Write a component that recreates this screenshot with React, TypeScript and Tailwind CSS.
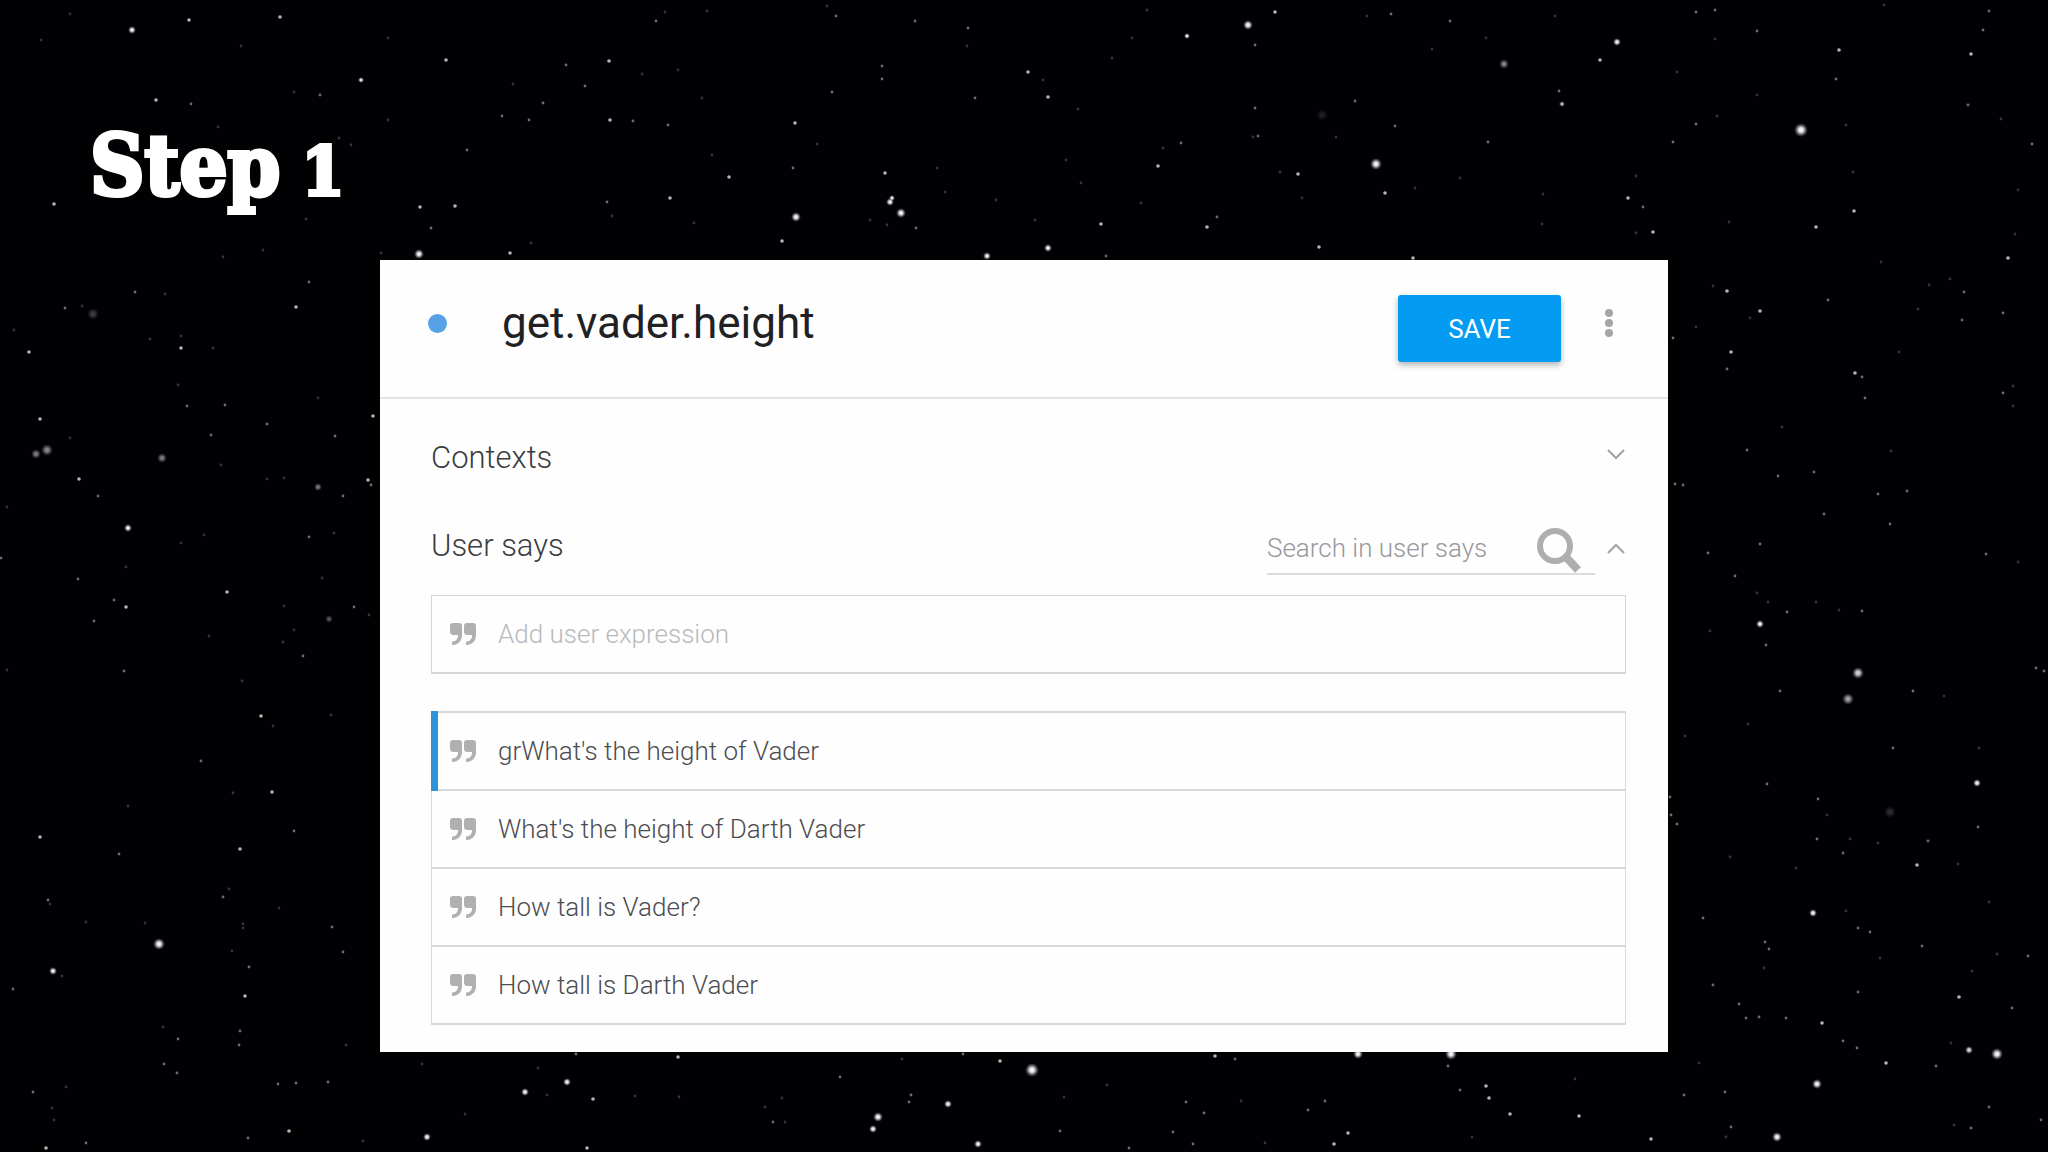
import React from "react";

type Point = [number, number];
type Glow = [number, number, number, number];

const FAINT: Point[] = [
  [70,14],[41,40],[241,46],[388,38],[642,74],[678,70],[665,12],[513,84],[294,92],[388,120],[218,127],[339,138],[351,145],
  [612,216],[306,219],[381,253],[531,243],[263,250],[223,257],[165,294],[82,306],[14,330],[150,339],[181,336],[213,348],[694,223],
  [707,11],[827,6],[967,46],[702,98],[817,144],[1043,80],[1078,109],[1066,160],[712,155],[887,225],[870,220],[937,168],[945,192],
  [996,200],[1035,220],[1081,183],[1141,203],[1163,148],[1112,58],[1253,137],[1280,172],[1302,198],[1336,137],[1367,16],[1147,10],[1132,38],
  [1432,49],[1486,38],[1555,16],[1415,188],[1460,178],[1543,194],[1542,224],[1636,176],[1636,233],[1717,116],[1677,72],[1715,39],
  [1884,5],[2001,119],[1846,125],[1757,95],[1853,172],[2018,190],[1729,222],[2015,234],[1881,262],[1713,286],[1950,279],[1929,285],
  [1750,318],[1918,309],[1696,327],[1899,352],[2013,386],[178,385],[318,398],[70,438],[221,465],[267,479],[284,478],[7,507],
  [204,535],[181,543],[334,533],[126,567],[322,578],[284,606],[369,615],[209,636],[294,630],[283,642],[7,670],[242,681],[273,726],
  [331,715],[233,793],[128,806],[50,904],[86,922],[145,923],[229,889],[279,908],[243,924],[243,928],[232,951],[62,976],[163,1027],
  [346,1045],[66,1087],[52,1108],[54,1120],[363,1141],[422,1064],[538,1068],[547,1095],[635,1096],[679,1097],[465,1114],[902,1059],
  [782,1098],[765,1107],[785,1122],[1064,1097],[1107,1085],[1241,1101],[1265,1143],[1472,1137],[1575,1079],[2013,406],[1782,427],
  [1891,451],[2018,562],[1757,593],[1768,602],[1816,602],[1839,610],[1710,631],[1944,696],[1748,724],[1685,736],[1979,748],
  [1827,815],[1850,839],[1878,843],[1730,857],[1796,868],[1958,864],[1846,911],[1989,902],[1880,958],[1997,954],[1972,971],
  [1764,968],[1951,1043],[1699,1063],[1954,1125],[1726,1137],
];

const MEDIUM: Point[] = [
  [566,65],[656,21],[585,86],[191,104],[320,95],[543,103],[502,116],[529,120],[633,121],[668,125],[467,150],[607,202],[431,228],
  [309,282],[135,292],[65,308],[836,16],[915,21],[968,28],[882,66],[882,79],[832,92],[975,98],[793,168],[916,228],[1106,256],
  [1181,143],[1255,45],[1255,108],[1258,136],[1355,101],[1217,217],[1391,14],[1450,21],[1559,91],[1395,126],[1488,142],[1643,207],
  [1673,142],[1696,124],[1696,12],[1715,10],[1757,31],[1836,79],[1989,11],[1983,30],[1968,105],[2032,144],[1964,292],[1828,300],
  [1962,320],[2003,313],[1673,338],[1727,369],[1862,377],[1865,398],[2003,393],[187,406],[225,405],[267,424],[211,435],[335,436],
  [98,496],[371,485],[343,496],[309,537],[1,558],[78,579],[114,600],[94,621],[354,607],[303,656],[124,671],[201,761],[119,854],
  [294,831],[48,900],[223,897],[332,927],[343,952],[13,989],[249,967],[178,1039],[240,1031],[239,1045],[164,1064],[177,1073],
  [278,1084],[296,1083],[328,1082],[33,1092],[248,1138],[86,1143],[576,1054],[963,1054],[840,1077],[773,1122],[911,1095],
  [909,1102],[1060,1131],[1235,1059],[1186,1102],[1204,1113],[1173,1132],[1193,1144],[1129,1148],[1308,1110],[1325,1101],
  [1448,1066],[1460,1090],[1747,450],[1778,476],[1814,472],[1675,484],[1683,485],[1878,494],[1907,491],[1824,514],[1890,524],
  [1760,544],[1708,553],[1986,554],[1735,576],[1787,612],[1862,611],[1766,645],[2036,668],[2044,671],[1780,691],[1913,691],
  [1893,748],[1767,784],[1670,797],[1671,815],[1677,824],[1818,799],[1978,827],[1928,841],[1817,839],[1843,853],[1703,918],
  [1858,928],[1870,932],[1922,946],[1765,942],[1769,949],[2028,956],[1713,985],[1858,992],[1739,1004],[1746,1018],[1759,1017],
  [1786,1018],[2012,1008],[1843,1041],[1857,1048],[1936,1066],[1684,1095],[1725,1092],[1989,1107],[2041,1120],[1971,1128],
  [1731,1127],
];

const BRIGHT: Point[] = [
  [189,20],[280,17],[446,60],[609,61],[156,100],[610,120],[54,204],[420,207],[455,206],[670,198],[510,253],[296,307],[181,348],
  [29,352],[795,123],[1028,72],[1048,97],[729,177],[885,173],[782,241],[1101,224],[1158,166],[1275,12],[1298,174],[1207,227],
  [1319,247],[1600,60],[1385,193],[1413,258],[1628,198],[1653,232],[1839,50],[1971,54],[1854,211],[1816,227],[2008,258],
  [1727,291],[1760,311],[1731,352],[1855,373],[373,416],[40,419],[79,479],[368,480],[126,607],[227,592],[261,716],[272,792],
  [40,837],[240,849],[245,996],[289,1131],[46,1148],[587,1148],[593,1099],[678,1057],[1000,1061],[1215,1056],[1348,1133],
  [1334,1144],[1486,1086],[1489,1098],[1510,1114],[1579,1116],[1651,1139],[1917,865],[1959,997],[1822,1023],[1886,1063],
];

/* x, y, radius, opacity */
const GLOWS: Glow[] = [
  [132,30,4,1],[361,80,3,1],[419,254,5,1],[93,314,6,0.25],[892,198,3,1],[890,202,4,1],[901,213,5,1],[796,217,5,1],[987,256,4,1],
  [1048,248,4,1],[1187,36,3,1],[1248,25,5,1],[1322,115,6,0.12],[1376,164,6,1],[1504,64,5,0.55],[1617,42,4,1],[1562,104,3,0.8],
  [1801,130,7,1],[47,450,6,0.55],[36,454,5,0.5],[162,458,5,0.5],[318,487,4,0.5],[128,528,4,1],[329,619,4,0.35],[159,944,6,1],
  [53,971,4,1],[427,1137,4,1],[567,1082,4,1],[525,1092,4,1],[1032,1070,7,1],[948,1104,4,1],[878,1117,5,1],[873,1129,4,1],
  [978,1144,4,1],[1358,1054,5,1],[1451,1054,6,1],[1760,624,4,1],[1858,673,6,0.85],[1848,699,6,0.65],[1977,783,4,1],
  [1890,812,6,0.18],[1813,913,4,1],[1969,1050,4,0.9],[1997,1054,6,1],[1817,1084,5,1],[1777,1137,5,1],
];

function StarField() {
  return (
    <svg
      className="absolute inset-0 h-full w-full"
      viewBox="0 0 2048 1152"
      preserveAspectRatio="xMidYMid slice"
      aria-hidden="true"
    >
      <defs>
        <radialGradient id="glow">
          <stop offset="0" stopColor="#fff" />
          <stop offset="0.35" stopColor="#f0f2f6" stopOpacity="0.9" />
          <stop offset="1" stopColor="#8890a0" stopOpacity="0" />
        </radialGradient>
      </defs>
      <g fill="#fff" opacity="0.2">
        {FAINT.map(([x, y], i) => <circle key={i} cx={x} cy={y} r="1.4" />)}
      </g>
      <g fill="#fff" opacity="0.42">
        {MEDIUM.map(([x, y], i) => <circle key={i} cx={x} cy={y} r="1.4" />)}
      </g>
      <g fill="#fff" opacity="0.7">
        {BRIGHT.map(([x, y], i) => <circle key={i} cx={x} cy={y} r="1.8" />)}
      </g>
      <g fill="url(#glow)">
        {GLOWS.map(([x, y, r, o], i) => <circle key={i} cx={x} cy={y} r={r} opacity={o} />)}
      </g>
    </svg>
  );
}

function QuoteIcon() {
  return (
    <svg className="h-[22px] w-[26px] shrink-0 fill-[#b0b0b2]" viewBox="0 0 26 22" aria-hidden="true">
      <path d="M3 0h6a3 3 0 0 1 3 3v9.500c0 5-4 9.500-9.300 9.500H2v-3.500h.7c3 0 5.300-2.500 5.300-5.700V12H3.500A3.500 3.500 0 0 1 0 8.500V3a3 3 0 0 1 3-3z" />
      <path d="M17 0h6a3 3 0 0 1 3 3v9.500c0 5-4 9.500-9.300 9.500H16v-3.500h.7c3 0 5.300-2.500 5.300-5.700V12h-4.500A3.500 3.500 0 0 1 14 8.500V3a3 3 0 0 1 3-3z" />
    </svg>
  );
}

function Chevron({ up = false }: { up?: boolean }) {
  return (
    <svg
      className="h-[12px] w-[20px] fill-none stroke-[#a3a3a5] stroke-2"
      viewBox="0 0 20 12"
      aria-hidden="true"
    >
      <path d={up ? "M2 10l8-8 8 8" : "M2 2l8 8 8-8"} />
    </svg>
  );
}

const EXPRESSIONS = [
  "grWhat's the height of Vader",
  "What's the height of Darth Vader",
  "How tall is Vader?",
  "How tall is Darth Vader",
];

export default function App() {
  return (
    <main className="relative min-h-screen overflow-hidden bg-[#010103] font-['Roboto',sans-serif]">
      <StarField />
      <div className="relative flex flex-col pb-[99px] pt-[116px]">
        <h1 className="h-[100px] pl-[90px] font-['DejaVu_Serif_Condensed','DejaVu_Serif',serif] text-[84px] font-bold leading-[100px] text-white [-webkit-text-stroke:4px_white]">
          Step<span className="text-[68px]"> 1</span>
        </h1>

        <section className="mx-auto mt-[44px] w-full max-w-[1288px] bg-[#fefefe] pb-[27px]">
          <header className="flex h-[139px] items-start border-b-2 border-[#e4e4e5] pl-[48px] pr-[55px] pt-[35px]">
            <span className="mt-[19px] size-[19px] rounded-full bg-[#57a2e6]" />
            <h2 className="ml-[55px] flex-1 text-[44px] leading-[56px] text-[#212124]">get.vader.height</h2>
            <button
              type="button"
              className="h-[67px] w-[163px] rounded-[3px] bg-[#039cf2] pt-[2px] text-[26px] text-white shadow-[0_3px_6px_rgba(0,0,0,0.3)]"
            >
              SAVE
            </button>
            <button type="button" aria-label="More options" className="ml-[44px] mt-[13px]">
              <svg className="h-[30px] w-[8px] fill-[#a5a5a7]" viewBox="0 0 8 30" aria-hidden="true">
                <circle cx="4" cy="5" r="4" />
                <circle cx="4" cy="15" r="4" />
                <circle cx="4" cy="25" r="4" />
              </svg>
            </button>
          </header>

          <div className="pl-[51px] pr-[42px]">
            <button type="button" className="mt-[39px] flex h-[40px] w-full items-center justify-between">
              <span className="text-[31px] font-light leading-[40px] text-[#3c3c40]">Contexts</span>
              <span className="mb-[8px]">
                <Chevron />
              </span>
            </button>

            <div className="mt-[48px] flex h-[40px] items-center">
              <h3 className="flex-1 text-[31px] font-light leading-[40px] text-[#3c3c40]">User says</h3>
              <label className="mt-[8px] flex h-[50px] w-[328px] items-center justify-between border-b-2 border-[#dcdcde] pr-[13px]">
                <input
                  type="text"
                  aria-label="Search in user says"
                  placeholder="Search in user says"
                  className="mb-[2px] w-[240px] text-[26px] font-light leading-[32px] outline-none placeholder:text-[#98989c]"
                />
                <svg className="mt-[2px] h-[46px] w-[46px] shrink-0 fill-none stroke-[#adaeb0]" viewBox="0 0 46 46" aria-hidden="true">
                  <circle cx="19" cy="19" r="15" strokeWidth="6" />
                  <path d="M30 30l12 13" strokeWidth="8" />
                </svg>
              </label>
              <button type="button" aria-label="Collapse user says" className="ml-[11px] mt-[6px]">
                <Chevron up />
              </button>
            </div>

            <label className="mt-[29px] flex h-[79px] items-center border border-b-2 border-[#d6d6d9] pl-[18px]">
              <QuoteIcon />
              <input
                type="text"
                aria-label="Add user expression"
                placeholder="Add user expression"
                className="ml-[22px] flex-1 text-[26px] font-light leading-[32px] outline-none placeholder:text-[#b9b9bd]"
              />
            </label>

            <ul className="mt-[37px] border-x border-t-2 border-[#d9d9dc]">
              {EXPRESSIONS.map((text, i) => (
                <li key={text} className="relative flex h-[78px] items-center border-b-2 border-[#d9d9dc] pl-[18px]">
                  {i === 0 && <span className="absolute -left-px -top-[2px] h-[80px] w-[7px] bg-[#3093d9]" />}
                  <QuoteIcon />
                  <span className="ml-[22px] text-[26px] font-light leading-[32px] text-[#4c4c50]">{text}</span>
                </li>
              ))}
            </ul>
          </div>
        </section>
      </div>
    </main>
  );
}
